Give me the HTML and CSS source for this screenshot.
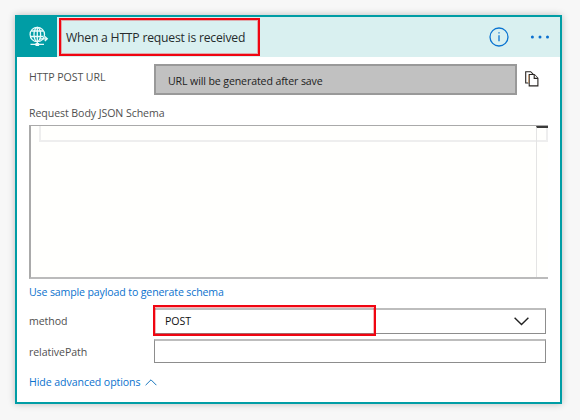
FILE: index.html
```
<!DOCTYPE html>
<html lang="en">
<head>
<meta charset="utf-8">
<title>When a HTTP request is received</title>
<link rel="stylesheet" href="styles.css">
</head>
<body>
<main class="card">
  <header class="header">
    <div class="connector">
      <svg width="20" height="22" viewBox="0 0 20 22" fill="none" stroke="#e9fafa" stroke-width="1.3">
        <circle cx="8.3" cy="8.5" r="7.2"/>
        <ellipse cx="8.3" cy="8.5" rx="3.3" ry="7.2"/>
        <path d="M8.3 1.3v14.4M2.3 5h12M1.1 10.5h13M8.3 16v2M1.5 18.3h13.5M11 12.8h7M15.8 10.5l2.5 2.3-2.5 2.3"/>
        <path d="M6.5 17h3.6v3H6.5z" fill="#e9fafa" stroke="none"/>
      </svg>
    </div>
    <h1 class="title">When a HTTP request is received</h1>
    <svg class="info" width="20" height="20" viewBox="0 0 20 20" fill="none" stroke="#0b74d1" stroke-width="1.3">
      <circle cx="10" cy="10" r="9"/>
      <path d="M10 8.2v6M10 5.2v1.4"/>
    </svg>
    <svg class="more" width="20" height="4" viewBox="0 0 20 4" fill="#0b6fcf">
      <circle cx="2.4" cy="2" r="1.5"/><circle cx="10" cy="2" r="1.5"/><circle cx="17.5" cy="2" r="1.5"/>
    </svg>
  </header>
  <section class="body">
    <div class="row url-row">
      <span class="label">HTTP POST URL</span>
      <div class="url">URL will be generated after save</div>
      <svg class="copy" width="14" height="16" viewBox="0 0 14 16" fill="#fff" stroke="#292522" stroke-width="1.1">
        <path d="M3.5 12H.7V.7h5l2.6 2.6"/>
        <path d="M4.2 3.5h5.1l3.6 3.8v7.6H4.2z"/>
        <path d="M9.2 3.5v3.9h3.7"/>
        <path d="M3.6 4v8" stroke="#d39a62" stroke-width=".7"/>
      </svg>
    </div>
    <div class="schema-label">Request Body JSON Schema</div>
    <div class="editor">
      <div class="line"></div>
      <div class="ruler"></div>
    </div>
    <a class="sample">Use sample payload to generate schema</a>
    <div class="row method-row">
      <span class="label">method</span>
      <div class="field select">
        <span class="value">POST</span>
        <svg width="15" height="9" viewBox="0 0 15 9" fill="none" stroke="#222" stroke-width="1.4"><path d="M.6.8l6.9 6.8L14.4.8"/></svg>
        <div class="highlight"></div>
      </div>
    </div>
    <div class="row path-row">
      <span class="label">relativePath</span>
      <div class="field"></div>
    </div>
    <a class="advanced">Hide advanced options
      <svg width="12" height="7" viewBox="0 0 12 7" fill="none" stroke="#1976bd" stroke-width="1"><path d="M.6 6.2L6 .8l5.4 5.4"/></svg>
    </a>
  </section>
</main>
</body>
</html>
```
FILE: styles.css
```
* { box-sizing: border-box; }
body {
  margin: 0;
  padding: 15px;
  height: 420px;
  overflow: hidden;
  background: #f7f7f7;
  font: 10.6px/16px "Open Sans", "Noto Sans", sans-serif;
  letter-spacing: -.08px;
  color: #505050;
}
.card {
  width: 547px;
  height: 389px;
  border: 2px solid #009da5;
  background: #fff;
  box-shadow: 0 0 7px rgba(0, 0, 0, .24);
}
.header {
  display: flex;
  align-items: center;
  height: 40px;
  background: #d9f0f0;
}
.connector {
  flex: none;
  width: 40px;
  height: 40px;
  padding: 9px 0 0 12px;
  background: #009da5;
}
.title {
  flex: none;
  width: 201px;
  height: 38px;
  margin: 0 0 0 2px;
  padding-left: 5px;
  border: 2px solid #f00511;
  box-shadow: inset 0 0 0 1px rgba(237, 7, 18, .3);
  font-size: 12.2px;
  line-height: 36px;
  font-weight: 400;
  letter-spacing: -.22px;
  color: #252b2c;
  white-space: nowrap;
}
.info { margin-left: 229px; }
.more { margin-left: 21px; }
.body { padding: 7px 12px 0; }
.row { display: flex; }
.label { flex: none; width: 125px; }
.url-row { height: 31px; }
.url-row .label { padding-top: 5px; }
.url {
  width: 363px;
  padding-left: 12px;
  border: 2px solid #999;
  background: #c1c1c1;
  line-height: 30px;
  letter-spacing: -.12px;
  color: #1d1d1d;
}
.copy { margin: 7px 0 0 8px; }
.schema-label { margin-top: 10px; height: 20px; }
.editor {
  position: relative;
  width: 519px;
  height: 154px;
  border: 1px solid #aaa;
  border-left: 2px solid #aaa;
  border-bottom: 2px solid #bbb;
  border-right: 0;
  background: #fffffd;
}
.line {
  height: 16px;
  margin-left: 8px;
  border: 2px solid #eee;
  border-top: 0;
}
.ruler {
  position: absolute;
  top: 0;
  right: 0;
  width: 12px;
  height: 151px;
  border-left: 1px solid #e4e4e4;
  border-top: 2px solid #3a3a3a;
}
.sample, .advanced { color: #0b72ce; }
.sample { display: block; margin-top: 5px; height: 16px; letter-spacing: -.14px; }
.method-row { margin-top: 8px; height: 26px; }
.method-row .label { padding-top: 5px; }
.field {
  width: 392px;
  border: 1px solid #8d8d8d;
  border-top: 2px solid #bdbdbd;
}
.select {
  position: relative;
  display: flex;
  align-items: center;
  justify-content: space-between;
  padding: 0 16px 0 10px;
  color: #111;
}
.value { padding-bottom: 2px; }
.highlight {
  position: absolute;
  left: -2px;
  top: -5px;
  width: 223px;
  height: 31px;
  border: 2px solid #f00511;
  box-shadow: inset 0 0 0 1px rgba(237, 7, 18, .3);
}
.path-row { margin-top: 5px; height: 24px; }
.path-row .label { padding-top: 5px; }
.advanced {
  display: flex;
  align-items: center;
  gap: 4px;
  margin-top: 11px;
}
```
